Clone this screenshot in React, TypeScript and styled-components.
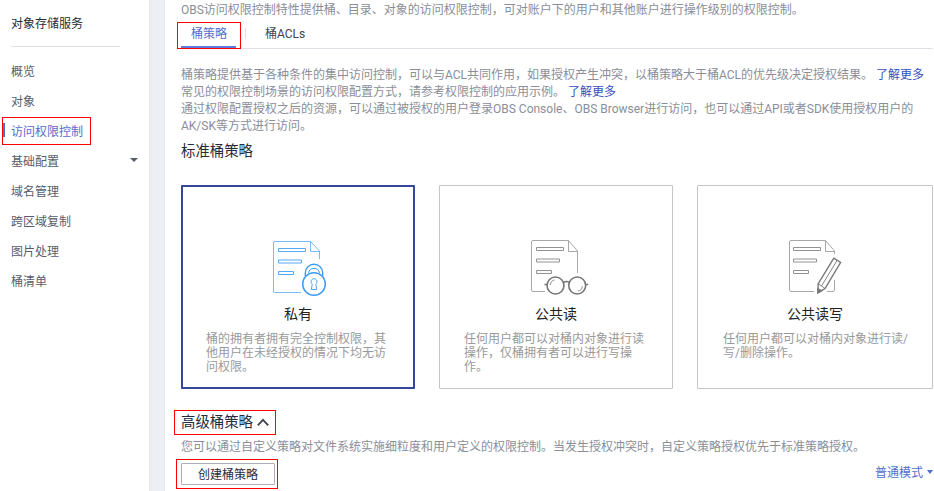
import React from "react";
import styled, { createGlobalStyle, css } from "styled-components";

const GlobalStyle = createGlobalStyle`
  * { box-sizing: border-box; }
  body {
    margin: 0;
    overflow: hidden;
    background: #fff;
    font-family: Roboto, "Noto Sans CJK SC", sans-serif;
    font-size: 12px;
    color: #8a8e99;
  }
`;

const Page = styled.div`
  display: flex;
  width: 934px;
  height: 491px;
  overflow: hidden;
`;

const Sidebar = styled.aside`
  width: 149px;
  flex: none;
  padding-top: 9px;
`;

const ServiceName = styled.div`
  height: 38px;
  margin: 0 29px 8px 11px;
  line-height: 30px;
  color: #252b3a;
  border-bottom: 1px solid #dfe1e6;
`;

const Gutter = styled.div`
  width: 16px;
  flex: none;
  background: #eeeff5;
  box-shadow: inset 1px 0 #e8e9ef, inset -1px 0 #e8e9ef;
`;

const Mark = styled.span<{ $inset: string }>`
  position: absolute;
  inset: ${(p) => p.$inset};
  border: 1px solid #f00;
  pointer-events: none;
`;

const NavItem = styled.div<{ $active?: boolean }>`
  position: relative;
  display: flex;
  align-items: center;
  justify-content: space-between;
  height: 30px;
  padding: 0 11px;
  color: ${(p) => (p.$active ? "#526ecc" : "#575d6c")};
  ${(p) =>
    p.$active &&
    css`
      &::before {
        content: "";
        position: absolute;
        left: 3px;
        top: 8px;
        width: 2px;
        height: 14px;
        background: #526ecc;
      }
    `}
`;

const Caret = styled.span<{ $half: number; $color: string }>`
  border: ${(p) => p.$half}px solid transparent;
  border-top: 4px solid ${(p) => p.$color};
  border-bottom: 0;
`;

const Main = styled.main`
  width: 769px;
  flex: none;
  padding: 1px 1px 0 16px;
`;

const Line = styled.div<{ $height: number }>`
  height: ${(p) => p.$height}px;
  line-height: ${(p) => p.$height}px;
  white-space: nowrap;
`;

const Tabs = styled.div`
  display: flex;
  align-items: flex-start;
  height: 30px;
  border-bottom: 1px solid #dfe1e6;
`;

const Tab = styled.div<{ $active?: boolean }>`
  position: relative;
  height: 29px;
  line-height: 30px;
  padding: 0 9px 0 10px;
  color: ${(p) => (p.$active ? "#526ecc" : "#40444f")};
  ${(p) => p.$active && css`width: 55px; white-space: nowrap; border-bottom: 2px solid #5e7ce0;`}
`;

const TabDivider = styled.span`
  width: 1px;
  height: 11px;
  margin: 9px 9px 0 9px;
  background: #dfe1e6;
`;

const Intro = styled.div`
  padding-top: 18px;
`;

const Link = styled.a`
  margin-left: 3px;
  color: #344fc1;
`;

const Heading = styled.h2`
  margin: 0;
  font-size: 14.4px;
  font-weight: 400;
  line-height: 22px;
  color: #252b3a;
`;

const Cards = styled.div`
  display: grid;
  grid-template-columns: 234px 234px 236px;
  gap: 24px;
  height: 204px;
  margin: 16px 0 21px;
`;

const Card = styled.div<{ $selected?: boolean }>`
  display: flex;
  flex-direction: column;
  align-items: center;
  border-radius: 1px;
  border: ${(p) => (p.$selected ? "2px solid #344899" : "1px solid #c4c4c4")};
  padding-top: ${(p) => (p.$selected ? 43 : 44)}px;
`;

const IconBox = styled.div<{ $shift: number }>`
  display: flex;
  height: 74px;
  padding-left: ${(p) => p.$shift}px;
`;

const CardTitle = styled.div`
  height: 20px;
  font-size: 14px;
  line-height: 20px;
  color: #222;
`;

const CardText = styled.div`
  width: 186px;
  margin-top: 8px;
  padding-left: 1px;
  line-height: 14px;
  color: #999;
  white-space: nowrap;
`;

const Toggle = styled.div`
  position: relative;
  display: flex;
  align-items: center;
  gap: 4px;
  width: fit-content;
  height: 25px;
`;

const Footer = styled.div`
  display: flex;
  justify-content: space-between;
  margin-top: 4px;
`;

const CreateButton = styled.button`
  position: relative;
  width: 94px;
  height: 22px;
  padding: 1px 0 0;
  border: 1px solid #adb0b8;
  border-radius: 1px;
  background: #fff;
  font: inherit;
  line-height: 21px;
  color: #252b3a;
`;

const ModeSelect = styled.div`
  display: flex;
  align-items: center;
  gap: 4px;
  height: 17px;
  color: #526ecc;
`;

type Kind = "lock" | "glasses" | "pencil";

const outlines: Record<Kind, string> = {
  lock: "M41 62.5H15Q13.5 62.5 13.5 61V13Q13.5 11.5 15 11.5H50.5L59.5 21V29",
  glasses: "M25 61.5H13Q11.5 61.5 11.5 60V12Q11.5 10.5 13 10.5H48.5L57.5 21V43",
  pencil: "M37 61.5H14Q12.5 61.5 12.5 60V12Q12.5 10.5 14 10.5H48.5L57.5 21V24M57.5 50V60Q57.5 61.5 56 61.5H50",
};

function PolicyIcon({ kind }: { kind: Kind }) {
  const blue = kind === "lock";
  const dx = blue ? 18.5 : 16.5;
  const dy = blue ? 18.5 : 17.5;
  const main = blue ? "#3e9cf5" : "#777";
  const soft = blue ? "#77bbfb" : "#a8a8a8";
  return (
    <svg width="80" height="75" viewBox="0 0 80 75" fill="none">
      <path d={outlines[kind]} stroke={soft} />
      <path d={blue ? "M50.5 11.5V21.5H59.5" : "M48.5 10.5V21.5H57.5"} stroke={soft} />
      <g stroke={blue ? "#55a9f7" : "#929292"}>
        <path d={`M${dx} ${dy}h27v3h-27z`} />
        <path d={`M${dx} ${dy + 11.5}h23v3h-23z`} />
        <path d={`M${dx} ${dy + 23}h15v3h-15z`} />
      </g>
      {kind === "lock" && (
        <g stroke={main}>
          <path d="M45.3 46V43a8.7 8.7 0 0 1 17.4 0v3" strokeWidth="1.4" />
          <path d="M48.5 43a5.6 5.6 0 0 1 11 0" />
          <circle cx="54" cy="54" r="11.3" fill="#fff" strokeWidth="1.5" />
          <path d="M52.3 54.2a3 3 0 1 1 3.4 0l1 5.3h-5.4z" strokeWidth=".9" />
        </g>
      )}
      {kind === "glasses" && (
        <g stroke={main} strokeWidth="1.6">
          <circle cx="35.5" cy="55.5" r="8.5" fill="#fff" />
          <circle cx="57.2" cy="55.5" r="8.5" fill="#fff" />
          <path d="M43.5 52.5q3-2 6 0M27 54.5h-2.5M65.7 54.5h2.5" />
          <path d="M30.5 55a5 5 0 0 1 4-5M62.3 56a5 5 0 0 1-4.5 5" strokeWidth=".8" />
        </g>
      )}
      {kind === "pencil" && (
        <g stroke={main} strokeWidth="1.4">
          <path d="M56.8 28.2l6.8 4.3L48 58.5l-7 4.2.2-9z" fill="#fff" />
          <path d="M60 30.5L44.5 56M41.3 53.7l6.5 4.6" strokeWidth=".9" />
          <path d="M41 59v3.8l3.6-2z" fill={main} />
        </g>
      )}
    </svg>
  );
}

const navItems = ["概览", "对象", "访问权限控制", "基础配置", "域名管理", "跨区域复制", "图片处理", "桶清单"];

const policies: { kind: Kind; title: string; shift: number; lines: string[] }[] = [
  { kind: "lock", title: "私有", shift: 3, lines: ["桶的拥有者拥有完全控制权限，其", "他用户在未经授权的情况下均无访", "问权限。"] },
  { kind: "glasses", title: "公共读", shift: 7, lines: ["任何用户都可以对桶内对象进行读", "操作，仅桶拥有者可以进行写操", "作。"] },
  { kind: "pencil", title: "公共读写", shift: 4, lines: ["任何用户都可以对桶内对象进行读/", "写/删除操作。"] },
];

export default function App() {
  return (
    <Page>
      <GlobalStyle />
      <Sidebar>
        <ServiceName>对象存储服务</ServiceName>
        {navItems.map((label, i) => (
          <NavItem key={label} $active={i === 2}>
            {label}
            {i === 2 && <Mark $inset="2px 58px 0 2px" />}
            {i === 3 && <Caret $half={4} $color="#575d6c" />}
          </NavItem>
        ))}
      </Sidebar>
      <Gutter />
      <Main>
        <Line $height={18}>OBS访问权限控制特性提供桶、目录、对象的访问权限控制，可对账户下的用户和其他账户进行操作级别的权限控制。</Line>
        <Tabs>
          <Tab $active>
            桶策略
            <Mark $inset="3px -5px -3px -4px" />
          </Tab>
          <TabDivider />
          <Tab>桶ACLs</Tab>
        </Tabs>
        <Intro>
          <Line $height={17}>
            桶策略提供基于各种条件的集中访问控制，可以与ACL共同作用，如果授权产生冲突，以桶策略大于桶ACL的优先级决定授权结果。
            <Link>了解更多</Link>
          </Line>
          <Line $height={17}>
            常见的权限控制场景的访问权限配置方式，请参考权限控制的应用示例。
            <Link>了解更多</Link>
          </Line>
          <Line $height={17}>通过权限配置授权之后的资源，可以通过被授权的用户登录OBS Console、OBS Browser进行访问，也可以通过API或者SDK使用授权用户的</Line>
          <Line $height={17}>AK/SK等方式进行访问。</Line>
        </Intro>
        <Heading>
          <Line $height={34}>标准桶策略</Line>
        </Heading>
        <Cards>
          {policies.map((p, i) => (
            <Card key={p.kind} $selected={i === 0}>
              <IconBox $shift={p.shift}>
                <PolicyIcon kind={p.kind} />
              </IconBox>
              <CardTitle>{p.title}</CardTitle>
              <CardText>
                {p.lines.map((l) => (
                  <div key={l}>{l}</div>
                ))}
              </CardText>
            </Card>
          ))}
        </Cards>
        <Toggle>
          <Heading>高级桶策略</Heading>
          <svg width="12" height="10" viewBox="0 0 12 10" fill="none">
            <path d="M.8 7.4L6 1.8l5.2 5.6" stroke="#40444f" strokeWidth="1.8" />
          </svg>
          <Mark $inset="0 -7px 0 -7px" />
        </Toggle>
        <Line $height={24}>您可以通过自定义策略对文件系统实施细粒度和用户定义的权限控制。当发生授权冲突时，自定义策略授权优先于标准策略授权。</Line>
        <Footer>
          <CreateButton>
            创建桶策略
            <Mark $inset="-5px -4px -5px -6px" />
          </CreateButton>
          <ModeSelect>
            普通模式
            <Caret $half={3} $color="#526ecc" />
          </ModeSelect>
        </Footer>
      </Main>
    </Page>
  );
}
